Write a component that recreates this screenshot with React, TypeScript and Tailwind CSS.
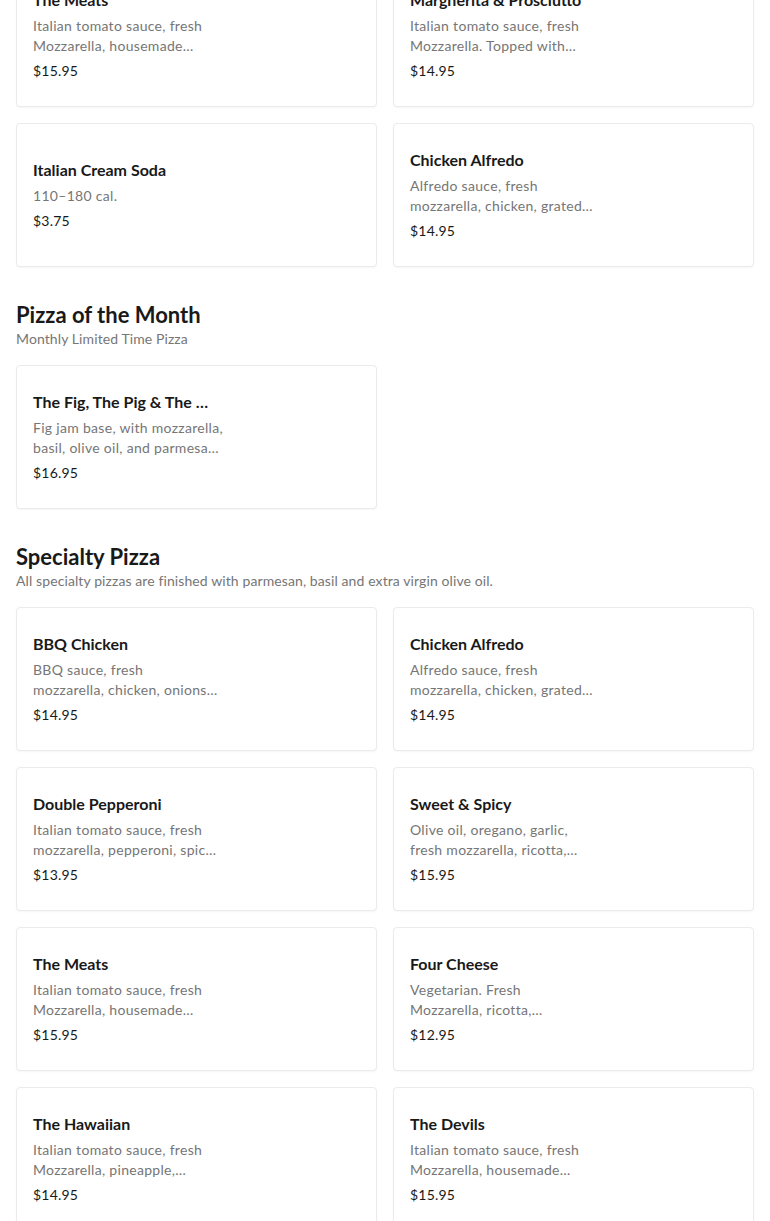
const font = { fontFamily: 'Lato, "Liberation Sans", sans-serif' };

type Item = { name: string; desc: string; price: string };

// descriptions as the menu shows them: two lines, the second clipped
const topRows: Item[] = [
  { name: 'The Meats', desc: 'Italian tomato sauce, fresh\nMozzarella, housemade…', price: '$15.95' },
  { name: 'Margherita & Prosciutto', desc: 'Italian tomato sauce, fresh\nMozzarella. Topped with…', price: '$14.95' },
  { name: 'Italian Cream Soda', desc: '110–180 cal.', price: '$3.75' },
  { name: 'Chicken Alfredo', desc: 'Alfredo sauce, fresh\nmozzarella, chicken, grated…', price: '$14.95' },
];

const monthly: Item[] = [
  { name: 'The Fig, The Pig & The …', desc: 'Fig jam base, with mozzarella,\nbasil, olive oil, and parmesa…', price: '$16.95' },
];

const specialty: Item[] = [
  { name: 'BBQ Chicken', desc: 'BBQ sauce, fresh\nmozzarella, chicken, onions…', price: '$14.95' },
  { name: 'Chicken Alfredo', desc: 'Alfredo sauce, fresh\nmozzarella, chicken, grated…', price: '$14.95' },
  { name: 'Double Pepperoni', desc: 'Italian tomato sauce, fresh\nmozzarella, pepperoni, spic…', price: '$13.95' },
  { name: 'Sweet & Spicy', desc: 'Olive oil, oregano, garlic,\nfresh mozzarella, ricotta,…', price: '$15.95' },
  { name: 'The Meats', desc: 'Italian tomato sauce, fresh\nMozzarella, housemade…', price: '$15.95' },
  { name: 'Four Cheese', desc: 'Vegetarian. Fresh\nMozzarella, ricotta,…', price: '$12.95' },
  { name: 'The Hawaiian', desc: 'Italian tomato sauce, fresh\nMozzarella, pineapple,…', price: '$14.95' },
  { name: 'The Devils', desc: 'Italian tomato sauce, fresh\nMozzarella, housemade…', price: '$15.95' },
];

const ItemCard = ({ item }: { item: Item }) => {
  const [first, rest] = item.desc.split('\n');
  return (
    <div className="h-[144px] rounded-[4px] border border-[#ebebeb] bg-white px-4 flex items-center shadow-[0_1px_2px_rgba(0,0,0,0.04)]">
      <div className="w-[190px] flex flex-col">
        <div className="text-[16px] leading-[22px] font-bold text-[#191919] whitespace-nowrap">{item.name}</div>
        <div className="mt-[5px] text-[14px] leading-[20px] text-[#767676] tracking-[0.3px] whitespace-nowrap">
          <div>{first}</div>
          {rest && <div>{rest}</div>}
        </div>
        <div className="mt-[5px] text-[14px] leading-[20px] text-[#191919] tracking-[0.2px]">{item.price}</div>
      </div>
    </div>
  );
};

const Grid = ({ items }: { items: Item[] }) => (
  <div className="grid grid-cols-2 gap-4">
    {items.map((item, i) => (
      <ItemCard key={i} item={item} />
    ))}
  </div>
);

const SectionHead = ({ title, sub }: { title: string; sub: string }) => (
  <div className="mt-[34px] mb-[16px]">
    <h2 className="text-[22px] leading-[28px] font-bold text-[#191919]">{title}</h2>
    <p className="text-[14px] leading-[20px] text-[#767676] tracking-[0.1px]">{sub}</p>
  </div>
);

export default function App() {
  return (
    <div className="bg-white min-h-screen px-4 overflow-hidden" style={font}>
      <div className="-mt-[37px] pb-10">
        <Grid items={topRows} />
        <SectionHead title="Pizza of the Month" sub="Monthly Limited Time Pizza" />
        <Grid items={monthly} />
        <SectionHead title="Specialty Pizza" sub="All specialty pizzas are finished with parmesan, basil and extra virgin olive oil." />
        <Grid items={specialty} />
      </div>
    </div>
  );
}
